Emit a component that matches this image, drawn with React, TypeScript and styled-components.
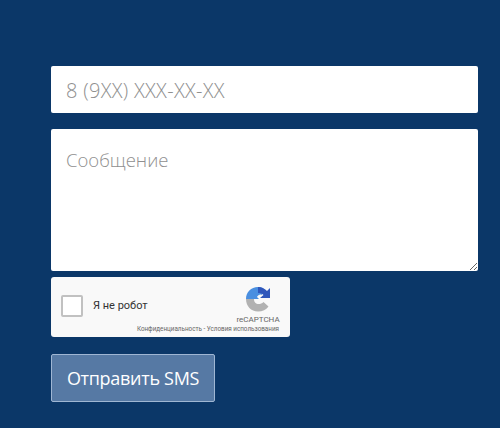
import React from "react";
import styled, { createGlobalStyle } from "styled-components";

const Global = createGlobalStyle`
  html, body { margin: 0; padding: 0; background: #0b3768; }
  * { box-sizing: border-box; }
`;

const Page = styled.div`
  width: 500px;
  height: 428px;
  padding: 66px 22px 0 51px;
  background: #0b3768;
  font-family: "Open Sans", "Noto Sans", sans-serif;
  overflow: hidden;
`;

const Form = styled.form`
  display: flex;
  flex-direction: column;
  align-items: flex-start;
`;

const PhoneInput = styled.input`
  display: block;
  width: 427px;
  height: 47px;
  padding: 2px 15px 0;
  border: 0;
  border-radius: 2px;
  background: #fff;
  font-family: inherit;
  font-size: 20px;
  letter-spacing: 0.3px;
  font-weight: 300;
  outline: none;
  &::placeholder { color: #8f8f8f; opacity: 1; }
`;

const MessageInput = styled.textarea`
  display: block;
  width: 427px;
  height: 142px;
  margin-top: 16px;
  padding: 18px 15px;
  border: 0;
  border-radius: 2px;
  background: #fff;
  font-family: inherit;
  font-size: 18.5px;
  font-weight: 300;
  outline: none;
  resize: vertical;
  &::placeholder { color: #8f8f8f; opacity: 1; }
`;

const Captcha = styled.div`
  position: relative;
  width: 239px;
  height: 60px;
  margin-top: 6px;
  padding: 0 10px;
  display: flex;
  align-items: flex-start;
  border-radius: 3px;
  background: #f9f9f9;
  font-family: Roboto, "Liberation Sans", sans-serif;
`;

const CaptchaCheck = styled.div`
  width: 22px;
  height: 22px;
  margin-top: 18px;
  border: 2px solid #c1c1c1;
  border-radius: 2px;
  background: #fff;
  flex: none;
`;

const CaptchaLabel = styled.div`
  flex: 1;
  margin: 23px 0 0 10px;
  font-size: 11px;
  line-height: 12px;
  color: #333;
`;

const CaptchaBrand = styled.div`
  position: absolute;
  right: 10px;
  top: 9px;
  display: flex;
  flex-direction: column;
  align-items: center;
  width: 44px;
`;

const CaptchaName = styled.div`
  margin-top: 3px;
  font-size: 8px;
  line-height: 10px;
  color: #666;
  white-space: nowrap;
`;

const CaptchaTerms = styled.div`
  position: absolute;
  right: 11px;
  bottom: 4px;
  font-size: 6.3px;
  line-height: 7px;
  color: #666;
  white-space: nowrap;
`;

const SendButton = styled.button`
  width: 164px;
  height: 48px;
  margin-top: 17px;
  padding: 0;
  border: 1px solid #9fb6d3;
  border-radius: 2px;
  background: #5679a4;
  color: #fff;
  font-family: inherit;
  font-size: 18px;
  letter-spacing: -0.3px;
  font-weight: 400;
`;

function RecaptchaLogo() {
  return (
    <svg width="26" height="26" viewBox="0 0 26 26">
      <path d="M1 13 C1 6 6 1 13 1 C15 1 17 1.500 18.500 2.500 L17 9 C15 8 13 9 12 11 L14 13 Z" fill="#4a8fe0" />
      <path d="M13 1 C17 1 20 3 22 5 L25 2 L25 12 L15 12 L18.500 9 C17 7.500 15.500 7 13 7 Z" fill="#2f57bb" />
      <path d="M1 13 L9 13 C9 16.500 11 18 13.500 18 C15.500 18 17 17.500 18.500 16 L23.500 20.500 C21 24 17.500 25.500 13 25.500 C6 25.500 1 20 1 13 Z" fill="#b2b2b2" />
    </svg>
  );
}

export default function App() {
  return (
    <Page>
      <Global />
      <Form>
        <PhoneInput placeholder="8 (9XX) XXX-XX-XX" />
        <MessageInput placeholder="Сообщение" />
        <Captcha>
          <CaptchaCheck />
          <CaptchaLabel>Я не робот</CaptchaLabel>
          <CaptchaBrand>
            <RecaptchaLogo />
            <CaptchaName>reCAPTCHA</CaptchaName>
          </CaptchaBrand>
          <CaptchaTerms>Конфиденциальность - Условия использования</CaptchaTerms>
        </Captcha>
        <SendButton type="button">Отправить SMS</SendButton>
      </Form>
    </Page>
  );
}
